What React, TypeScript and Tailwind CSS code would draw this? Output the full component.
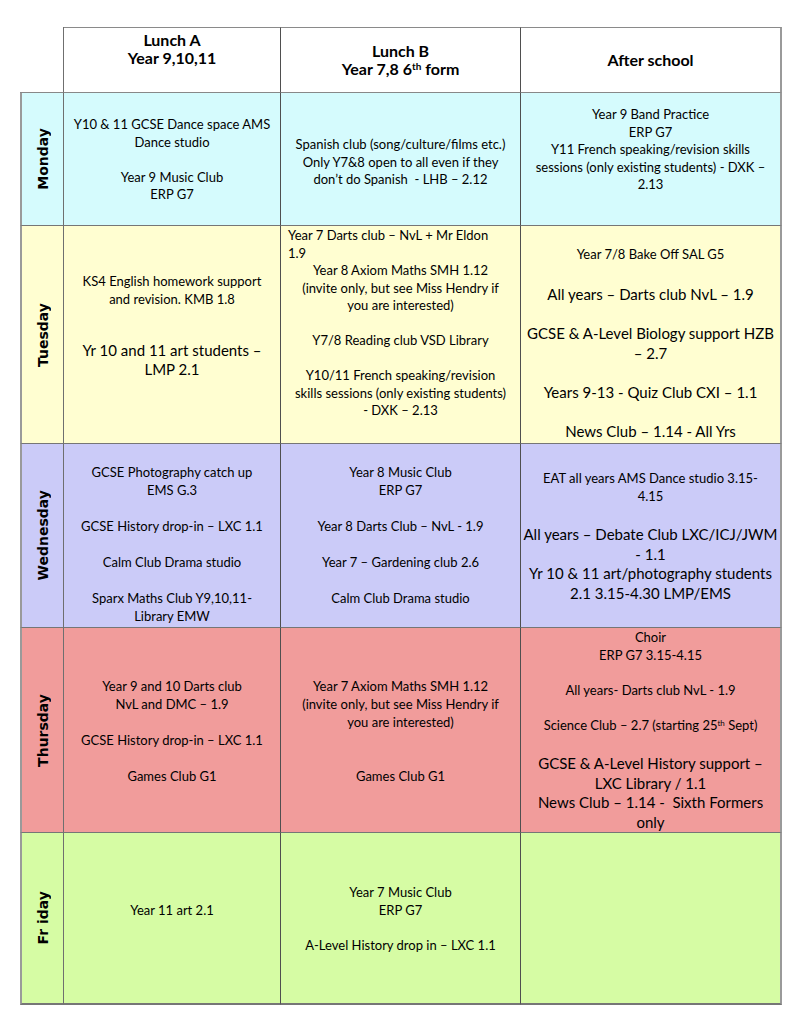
import React from "react";

type LProps = { children?: React.ReactNode; lh?: string; left?: boolean };

const S = ({ children, lh = "leading-[17.5px]", left }: LProps) => (
  <p className={`text-[13px] ${lh} ${left ? "self-stretch text-left pl-[7px]" : ""}`}>{children}</p>
);
const B = ({ children }: LProps) => <p className="text-[15px] leading-[19.5px]">{children}</p>;
const Gap = ({ h = "h-[17.5px]" }: { h?: string }) => <div className={`${h} shrink-0`} />;

type CellProps = {
  bg: string;
  pt?: string;
  right?: boolean;
  bottom?: boolean;
  children?: React.ReactNode;
};

function Cell({ bg, pt = "", right, bottom, children }: CellProps) {
  return (
    <div
      className={[
        "flex flex-col items-center text-center whitespace-nowrap border-r border-b border-r-[#4f4f4f] border-b-[#767676]",
        bg,
        pt,
        right ? "border-r-2 border-r-[#9a9a9a]" : "",
        bottom ? "border-b-2 border-b-[#9a9a9a]" : "",
      ].join(" ")}
    >
      {children}
    </div>
  );
}

function Day({ bg, label, bottom }: { bg: string; label: string; bottom?: boolean }) {
  return (
    <div
      className={[
        "flex items-center justify-center border-l-2 border-l-[#9a9a9a] border-r border-r-[#6f6f6f] border-b border-b-[#767676]",
        bg,
        bottom ? "border-b-2 border-b-[#9a9a9a]" : "",
      ].join(" ")}
    >
      <span className="[writing-mode:vertical-rl] rotate-180 whitespace-pre font-bold text-[14px] leading-none [font-family:'DejaVu_Sans',Verdana,sans-serif] text-black">
        {label}
      </span>
    </div>
  );
}

const MON = "bg-[#d5fbfd]";
const TUE = "bg-[#fffed1]";
const WED = "bg-[#cbcbf8]";
const THU = "bg-[#f19c9b]";
const FRI = "bg-[#d6fca4]";

export default function App() {
  return (
    <div className="w-[800px] h-[1024px] bg-white pt-[27px] pl-[20px] text-black [font-family:Lato,'Liberation_Sans',sans-serif]">
      <div className="grid grid-cols-[44px_217px_240px_261px] grid-rows-[66px_133px_218px_184px_205px_172px]">
        {/* Header */}
        <div className="border-r border-b border-r-[#6f6f6f] border-b-[#888]" />
        <div className="flex flex-col items-center pt-[3px] border-t border-r border-b border-t-[#8a8a8a] border-r-[#4f4f4f] border-b-[#888] font-bold text-[16px] leading-[18px] bg-white">
          <p>Lunch A</p>
          <p>Year 9,10,11</p>
        </div>
        <div className="flex flex-col items-center justify-center border-t border-r border-b border-t-[#8a8a8a] border-r-[#4f4f4f] border-b-[#888] font-bold text-[16px] leading-[18px] bg-white">
          <p>Lunch B</p>
          <p>
            Year 7,8 6<sup className="text-[10px]">th</sup> form
          </p>
        </div>
        <div className="flex flex-col items-center justify-center border-t border-r-2 border-b border-t-[#8a8a8a] border-r-[#9a9a9a] border-b-[#888] font-bold text-[16px] leading-[18px] bg-white">
          <p>After school</p>
        </div>

        {/* Monday */}
        <Day bg={MON} label="Monday" />
        <Cell bg={MON} pt="pt-[23px]">
          <S>Y10 &amp; 11 GCSE Dance space AMS</S>
          <S>Dance studio</S>
          <Gap />
          <S>Year 9 Music Club</S>
          <S>ERP G7</S>
        </Cell>
        <Cell bg={MON} pt="pt-[43px]">
          <S>Spanish club (song/culture/films etc.)</S>
          <S>Only Y7&amp;8 open to all even if they</S>
          <S>don’t do Spanish&nbsp; - LHB – 2.12</S>
        </Cell>
        <Cell bg={MON} pt="pt-[13px]" right>
          <S>Year 9 Band Practice</S>
          <S>ERP G7</S>
          <S>Y11 French speaking/revision skills</S>
          <S>sessions (only existing students) - DXK –</S>
          <S>2.13</S>
        </Cell>

        {/* Tuesday */}
        <Day bg={TUE} label="Tuesday" />
        <Cell bg={TUE} pt="pt-[47px]">
          <S>KS4 English homework support</S>
          <S>and revision. KMB 1.8</S>
          <Gap h="h-[32.5px]" />
          <B>Yr 10 and 11 art students –</B>
          <B>LMP 2.1</B>
        </Cell>
        <Cell bg={TUE} pt="pt-[1px]">
          <S left>Year 7 Darts club – NvL + Mr Eldon</S>
          <S left>1.9</S>
          <S>Year 8 Axiom Maths SMH 1.12</S>
          <S>(invite only, but see Miss Hendry if</S>
          <S>you are interested)</S>
          <Gap />
          <S>Y7/8 Reading club VSD Library</S>
          <Gap />
          <S>Y10/11 French speaking/revision</S>
          <S>skills sessions (only existing students)</S>
          <S>- DXK – 2.13</S>
        </Cell>
        <Cell bg={TUE} pt="pt-[20px]" right>
          <S>Year 7/8 Bake Off SAL G5</S>
          <Gap h="h-[21.5px]" />
          <B>All years – Darts club NvL – 1.9</B>
          <Gap h="h-[19.5px]" />
          <B>GCSE &amp; A-Level Biology support HZB</B>
          <B>– 2.7</B>
          <Gap h="h-[19.5px]" />
          <B>Years 9-13 - Quiz Club CXI – 1.1</B>
          <Gap h="h-[19.5px]" />
          <B>News Club – 1.14 - All Yrs</B>
        </Cell>

        {/* Wednesday */}
        <Day bg={WED} label="Wednesday" />
        <Cell bg={WED} pt="pt-[19px]">
          <S lh="leading-[18px]">GCSE Photography catch up</S>
          <S lh="leading-[18px]">EMS G.3</S>
          <Gap h="h-[18px]" />
          <S lh="leading-[18px]">GCSE History drop-in – LXC 1.1</S>
          <Gap h="h-[18px]" />
          <S lh="leading-[18px]">Calm Club Drama studio</S>
          <Gap h="h-[18px]" />
          <S lh="leading-[18px]">Sparx Maths Club Y9,10,11-</S>
          <S lh="leading-[18px]">Library EMW</S>
        </Cell>
        <Cell bg={WED} pt="pt-[19px]">
          <S lh="leading-[18px]">Year 8 Music Club</S>
          <S lh="leading-[18px]">ERP G7</S>
          <Gap h="h-[18px]" />
          <S lh="leading-[18px]">Year 8 Darts Club – NvL - 1.9</S>
          <Gap h="h-[18px]" />
          <S lh="leading-[18px]">Year 7 – Gardening club 2.6</S>
          <Gap h="h-[18px]" />
          <S lh="leading-[18px]">Calm Club Drama studio</S>
        </Cell>
        <Cell bg={WED} pt="pt-[25px]" right>
          <S lh="leading-[18px]">EAT all years AMS Dance studio 3.15-</S>
          <S lh="leading-[18px]">4.15</S>
          <Gap h="h-[20px]" />
          <B>All years – Debate Club LXC/ICJ/JWM</B>
          <B>- 1.1</B>
          <B>Yr 10 &amp; 11 art/photography students</B>
          <B>2.1 3.15-4.30 LMP/EMS</B>
        </Cell>

        {/* Thursday */}
        <Day bg={THU} label="Thursday" />
        <Cell bg={THU} pt="pt-[49px]">
          <S lh="leading-[18px]">Year 9 and 10 Darts club</S>
          <S lh="leading-[18px]">NvL and DMC – 1.9</S>
          <Gap h="h-[18px]" />
          <S lh="leading-[18px]">GCSE History drop-in – LXC 1.1</S>
          <Gap h="h-[18px]" />
          <S lh="leading-[18px]">Games Club G1</S>
        </Cell>
        <Cell bg={THU} pt="pt-[49px]">
          <S lh="leading-[18px]">Year 7 Axiom Maths SMH 1.12</S>
          <S lh="leading-[18px]">(invite only, but see Miss Hendry if</S>
          <S lh="leading-[18px]">you are interested)</S>
          <Gap h="h-[36px]" />
          <S lh="leading-[18px]">Games Club G1</S>
        </Cell>
        <Cell bg={THU} pt="pt-[1px]" right>
          <S lh="leading-[17.7px]">Choir</S>
          <S lh="leading-[17.7px]">ERP G7 3.15-4.15</S>
          <Gap h="h-[17.7px]" />
          <S lh="leading-[17.7px]">All years- Darts club NvL - 1.9</S>
          <Gap h="h-[17.7px]" />
          <S lh="leading-[17.7px]">
            Science Club – 2.7 (starting 25<sup className="text-[8px]">th</sup> Sept)
          </S>
          <Gap h="h-[19px]" />
          <B>GCSE &amp; A-Level History support –</B>
          <B>LXC Library / 1.1</B>
          <B>News Club – 1.14 -&nbsp; Sixth Formers</B>
          <B>only</B>
        </Cell>

        {/* Friday */}
        <Day bg={FRI} label="Fr iday" bottom />
        <Cell bg={FRI} pt="pt-[69px]" bottom>
          <S>Year 11 art 2.1</S>
        </Cell>
        <Cell bg={FRI} pt="pt-[51px]" bottom>
          <S lh="leading-[17.7px]">Year 7 Music Club</S>
          <S lh="leading-[17.7px]">ERP G7</S>
          <Gap h="h-[17.7px]" />
          <S lh="leading-[17.7px]">A-Level History drop in – LXC 1.1</S>
        </Cell>
        <Cell bg={FRI} right bottom />
      </div>
    </div>
  );
}
